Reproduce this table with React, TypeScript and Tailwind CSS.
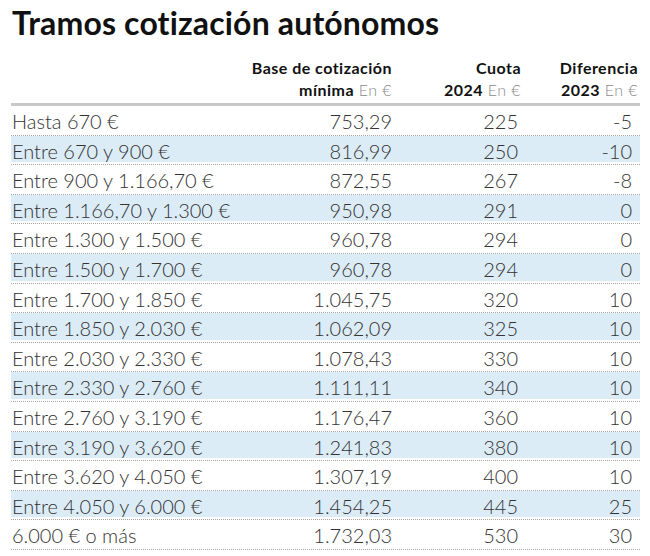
const rows: [string, string, string, string][] = [
  ['Hasta 670 €', '753,29', '225', '-5'],
  ['Entre 670 y 900 €', '816,99', '250', '-10'],
  ['Entre 900 y 1.166,70 €', '872,55', '267', '-8'],
  ['Entre 1.166,70 y 1.300 €', '950,98', '291', '0'],
  ['Entre 1.300 y 1.500 €', '960,78', '294', '0'],
  ['Entre 1.500 y 1.700 €', '960,78', '294', '0'],
  ['Entre 1.700 y 1.850 €', '1.045,75', '320', '10'],
  ['Entre 1.850 y 2.030 €', '1.062,09', '325', '10'],
  ['Entre 2.030 y 2.330 €', '1.078,43', '330', '10'],
  ['Entre 2.330 y 2.760 €', '1.111,11', '340', '10'],
  ['Entre 2.760 y 3.190 €', '1.176,47', '360', '10'],
  ['Entre 3.190 y 3.620 €', '1.241,83', '380', '10'],
  ['Entre 3.620 y 4.050 €', '1.307,19', '400', '10'],
  ['Entre 4.050 y 6.000 €', '1.454,25', '445', '25'],
  ['6.000 € o más', '1.732,03', '530', '30'],
];

const cols = 'grid grid-cols-[231px_150px_129px_119px]';

export default function App() {
  return (
    <div className="w-[650px] h-[556px] bg-white font-['Lato',sans-serif] overflow-hidden">
      <h1 className="pl-[12px] pt-[3px] text-[32px] leading-[40px] font-bold text-[#111] tracking-[0.005em]">
        Tramos cotización autónomos
      </h1>

      <div className="ml-[11px] w-[629px] mt-[14px]">
        <div className={`${cols} text-[16px] leading-[22px] tracking-[0.03em] text-right border-b-[3px] border-[#c9c9c9] pb-[2px]`}>
          <div />
          <div>
            <div className="font-bold text-[#111]">Base de cotización</div>
            <div>
              <span className="font-bold text-[#111]">mínima</span>{' '}
              <span className="font-light text-[#8a8a8a]">En €</span>
            </div>
          </div>
          <div>
            <div className="font-bold text-[#111]">Cuota</div>
            <div>
              <span className="font-bold text-[#111]">2024</span>{' '}
              <span className="font-light text-[#8a8a8a]">En €</span>
            </div>
          </div>
          <div className="pr-[2px]">
            <div className="font-bold text-[#111]">Diferencia</div>
            <div>
              <span className="font-bold text-[#111]">2023</span>{' '}
              <span className="font-light text-[#8a8a8a]">En €</span>
            </div>
          </div>
        </div>

        {rows.map((r, i) => (
          <div key={i} className="h-[29.6px] border-b border-dotted border-[#a5a5a5] pb-[2px]">
            <div
              className={`${cols} h-full items-center text-[20px] font-light text-[#333] ${i % 2 === 1 ? 'bg-[#dcecf7]' : ''}`}
            >
              <div className="pl-[1px] whitespace-nowrap">{r[0]}</div>
              <div className="text-right">{r[1]}</div>
              <div className="text-right pr-[3px]">{r[2]}</div>
              <div className="text-right pr-[8px]">{r[3]}</div>
            </div>
          </div>
        ))}
      </div>
    </div>
  );
}
